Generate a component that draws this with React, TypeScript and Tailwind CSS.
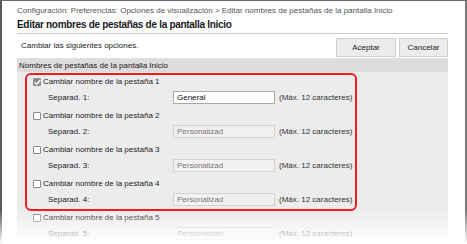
import React from 'react'

type TabRow = {
  n: number
  checked: boolean
  value: string
}

const rows: TabRow[] = [
  { n: 1, checked: true, value: 'General' },
  { n: 2, checked: false, value: 'Personalizad' },
  { n: 3, checked: false, value: 'Personalizad' },
  { n: 4, checked: false, value: 'Personalizad' },
  { n: 5, checked: false, value: 'Personalizad' },
]

function Box({ checked }: { checked: boolean }) {
  if (checked) {
    return (
      <span className="flex h-[8px] w-[8px] items-center justify-center rounded-[1px] bg-[#8c8c8c]">
        <svg width="7" height="7" viewBox="0 0 8 8" fill="none">
          <path d="M1.2 4.2 3.1 6 6.8 1.8" stroke="white" strokeWidth="1.6" strokeLinecap="round" strokeLinejoin="round" />
        </svg>
      </span>
    )
  }
  return <span className="block h-[8px] w-[8px] rounded-[1px] border border-[#8a8a8a] bg-white" />
}

function TabGroup({ row, last }: { row: TabRow; last?: boolean }) {
  const active = row.checked
  return (
    <div className={last ? '' : 'mb-[6px]'}>
      <div className="flex h-[12px] items-center gap-[2px] text-[8px] leading-[12px] text-[#222]">
        <Box checked={row.checked} />
        <span>Cambiar nombre de la pestaña {row.n}</span>
      </div>
      <div className="mt-[3px] flex h-[13px] items-center text-[8px] text-[#222]">
        <span className="w-[140px] pl-[15px]">Separad. {row.n}:</span>
        <div
          className={`flex h-[13px] w-[102px] items-center px-[3px] text-[8px] ${
            active ? 'border border-[#a8a8a8] bg-white text-[#111]' : 'border border-[#d2d2d2] bg-[#f1f1f1] text-[#777]'
          }`}
        >
          {row.value}
        </div>
        <span className="ml-[4px] text-[#333]">(Máx. 12 caracteres)</span>
      </div>
    </div>
  )
}

export default function App() {
  return (
    <div className="relative h-[244px] w-[467px] overflow-hidden bg-white font-['Liberation_Sans',Arial,sans-serif]">
      <div className="h-full border-l-2 border-r-2 border-t border-l-[#5a5a5a] border-r-[#7a7a7a] border-t-[#6a6a6a]">
        <div className="pl-[15px] pr-[17px] pt-[3px]">
          <div className="h-[14px] text-[8px] leading-[14px] text-[#555] whitespace-nowrap">
            Configuración: Preferencias: Opciones de visualización &gt; Editar nombres de pestañas de la pantalla Inicio
          </div>
          <h1 className="h-[16px] border-b border-[#cccccc] text-[10px] font-bold leading-[14px] tracking-[-0.3px] text-[#1a1a1a] whitespace-nowrap">
            Editar nombres de pestañas de la pantalla Inicio
          </h1>
          <div className="flex items-center justify-between border-b border-[#e0e0e0] pb-[1px] pt-[4px]">
            <span className="pb-[3px] pl-[4px] text-[8px] text-[#222]">Cambiar las siguientes opciones.</span>
            <div className="flex gap-[3px]">
              <button className="h-[19px] w-[60px] border border-[#d0d0d0] bg-[#ececec] text-[8px] text-[#222]">
                Aceptar
              </button>
              <button className="h-[19px] w-[49px] border border-[#d0d0d0] bg-[#ececec] text-[8px] text-[#222]">
                Cancelar
              </button>
            </div>
          </div>
          <div className="h-[13px] bg-[#dcdcdc] pl-[2px] text-[8px] leading-[13px] text-[#222]">
            Nombres de pestañas de la pantalla Inicio
          </div>
          <div className="h-[180px] bg-[#ececec] pt-[1px]">
            <div className="ml-[8px] w-[332px] rounded-[6px] border-2 border-[#ee1c25] pb-[3px] pl-[6px] pt-[1px]">
              {rows.slice(0, 4).map((r, i) => (
                <TabGroup key={r.n} row={r} last={i === 3} />
              ))}
            </div>
            <div className="mt-[1px] pl-[16px]">
              <TabGroup row={rows[4]} last />
            </div>
          </div>
        </div>
      </div>
      <div className="pointer-events-none absolute inset-x-0 bottom-0 h-[34px] bg-linear-to-b from-white/0 to-white" />
    </div>
  )
}
